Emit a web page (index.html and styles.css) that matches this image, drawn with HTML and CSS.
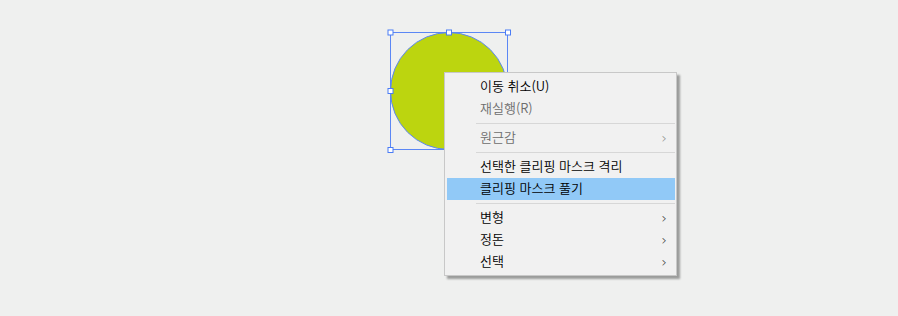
FILE: index.html
```html
<!DOCTYPE html>
<html lang="ko">
<head>
<meta charset="utf-8">
<link rel="stylesheet" href="styles.css">
</head>
<body>
<div class="canvas">
  <div class="selection">
    <svg class="shape" width="130" height="130" viewBox="0 0 130 130">
      <circle cx="60" cy="60" r="58.5" fill="#bcd50f" stroke="#5b87f5" stroke-width="1"/>
      <rect x="1.5" y="1.5" width="117" height="117" fill="none" stroke="#5b87f5" stroke-width="1"/>
      <rect x="-1" y="-1" width="5" height="5" fill="#fff" stroke="#4a7cf5" stroke-width="1"/>
      <rect x="57.5" y="-1" width="5" height="5" fill="#fff" stroke="#4a7cf5" stroke-width="1"/>
      <rect x="116.5" y="-1" width="5" height="5" fill="#fff" stroke="#4a7cf5" stroke-width="1"/>
      <rect x="-1" y="57.5" width="5" height="5" fill="#fff" stroke="#4a7cf5" stroke-width="1"/>
      <rect x="-1" y="116.5" width="5" height="5" fill="#fff" stroke="#4a7cf5" stroke-width="1"/>
    </svg>
  </div>

  <div class="menu">
    <div class="item"><span class="label">이동 취소(U)</span></div>
    <div class="item disabled"><span class="label">재실행(R)</span></div>
    <div class="sep"></div>
    <div class="item disabled"><span class="label">원근감</span><span class="arrow">›</span></div>
    <div class="sep"></div>
    <div class="item"><span class="label">선택한 클리핑 마스크 격리</span></div>
    <div class="item active"><span class="label">클리핑 마스크 풀기</span></div>
    <div class="sep"></div>
    <div class="item"><span class="label">변형</span><span class="arrow">›</span></div>
    <div class="item"><span class="label">정돈</span><span class="arrow">›</span></div>
    <div class="item"><span class="label">선택</span><span class="arrow">›</span></div>
  </div>
</div>
</body>
</html>
```

FILE: styles.css
```css
html, body {
  margin: 0;
  padding: 0;
  background: #eff0ef;
}
.canvas {
  position: relative;
  width: 898px;
  height: 316px;
  overflow: hidden;
  font-family: "Noto Sans CJK KR", "Noto Sans", sans-serif;
}
.selection {
  position: absolute;
  left: 389px;
  top: 31px;
}
.shape {
  display: block;
  overflow: visible;
}
.menu {
  position: absolute;
  left: 444px;
  top: 72px;
  width: 228px;
  padding: 3px 1px 2px 2px;
  background: #f1f1f1;
  border: 1px solid #c8c8c8;
  box-shadow: 3px 3px 2px rgba(0, 0, 0, 0.35);
}
.item {
  height: 22px;
  display: flex;
  align-items: center;
  justify-content: space-between;
  padding: 0 8px 0 33px;
  font-size: 13px;
  font-weight: 350;
  color: #000;
  line-height: 22px;
}
.item.disabled {
  color: #6d6d6d;
}
.item.active {
  background: #91c9f7;
}
.label {
  position: relative;
  top: -1px;
}
.arrow {
  font-family: "DejaVu Sans", sans-serif;
  font-size: 14px;
  color: #333;
}
.item.disabled .arrow {
  color: #8a8a8a;
}
.sep {
  height: 1px;
  background: #d7d7d7;
  margin: 3px 0 3px 29px;
}
```
